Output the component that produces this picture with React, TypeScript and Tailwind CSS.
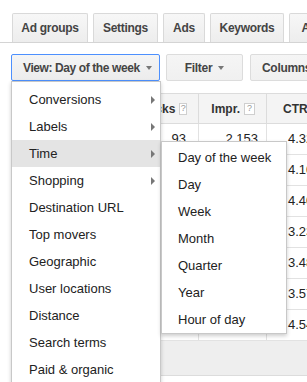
import React from "react";

const tabs = [
  { label: "Ad groups", w: "w-[76px]" },
  { label: "Settings", w: "w-[65px]" },
  { label: "Ads", w: "w-[42px]" },
  { label: "Keywords", w: "w-[74px]" },
  { label: "Auto targets", w: "w-[92px]" },
];

const menuItems: { label: string; arrow?: boolean; active?: boolean }[] = [
  { label: "Conversions", arrow: true },
  { label: "Labels", arrow: true },
  { label: "Time", arrow: true, active: true },
  { label: "Shopping", arrow: true },
  { label: "Destination URL" },
  { label: "Top movers" },
  { label: "Geographic" },
  { label: "User locations" },
  { label: "Distance" },
  { label: "Search terms" },
  { label: "Paid & organic" },
];

const subItems = ["Day of the week", "Day", "Week", "Month", "Quarter", "Year", "Hour of day"];

const rows = [
  ["Monday", "93", "2,153", "4.32%"],
  ["Tuesday", "88", "2,146", "4.10%"],
  ["Wednesday", "91", "2,068", "4.40%"],
  ["Thursday", "71", "2,198", "3.23%"],
  ["Friday", "64", "1,839", "3.48%"],
  ["Saturday", "58", "1,624", "3.57%"],
  ["Sunday", "82", "1,806", "4.54%"],
];

function Help() {
  return (
    <span className="ml-[4px] inline-flex h-[12px] w-[11px] items-center justify-center border border-[#cfcfcf] bg-white text-[9px] font-normal leading-none tracking-normal text-[#999]">
      ?
    </span>
  );
}

function Caret() {
  return <span className="ml-[6px] inline-block h-0 w-0 shrink-0 border-x-[3px] border-t-[4px] border-x-transparent border-t-[#777]" />;
}

export default function App() {
  return (
    <div className="relative h-[382px] w-[307px] overflow-hidden bg-white font-['Liberation_Sans',Arial,sans-serif] text-[13px] text-[#222]">
      {/* tabs */}
      <div className="box-border flex h-[43px] gap-[5px] border-b border-[#d4d4d4] pl-[12px] pt-[13px]">
        {tabs.map((t) => (
          <div
            key={t.label}
            className={`${t.w} flex h-[29px] shrink-0 items-center justify-center overflow-hidden whitespace-nowrap rounded-t-[2px] border border-b-0 border-[#d9d9d9] bg-gradient-to-b from-[#f7f7f7] to-[#ededed] text-[12px] font-bold tracking-[-0.3px] text-[#444]`}
          >
            {t.label}
          </div>
        ))}
      </div>

      {/* buttons */}
      <div className="mt-[11px] flex pl-[11px]">
        <div className="box-border flex h-[27px] w-[149px] shrink-0 items-center whitespace-nowrap rounded-[2px] border border-[#4d90fe] bg-gradient-to-b from-[#f5f5f5] to-[#ececec] pl-[11px] text-[12px] font-bold tracking-[-0.4px] text-[#444]">
          View: Day of the week
          <Caret />
        </div>
        <div className="ml-[6px] box-border flex h-[27px] w-[77px] shrink-0 items-center justify-center whitespace-nowrap rounded-[2px] border border-[#dcdcdc] bg-gradient-to-b from-[#f5f5f5] to-[#f0f0f0] text-[12px] font-bold tracking-[-0.3px] text-[#444]">
          Filter
          <Caret />
        </div>
        <div className="ml-[7px] box-border flex h-[27px] w-[90px] shrink-0 items-center whitespace-nowrap rounded-[2px] border border-[#dcdcdc] bg-gradient-to-b from-[#f5f5f5] to-[#f0f0f0] pl-[11px] text-[12px] font-bold tracking-[-0.3px] text-[#444]">
          Columns
          <Caret />
        </div>
      </div>

      {/* table */}
      <div className="ml-[11px] mt-[12px] w-[326px]">
        <div className="box-border grid h-[31px] grid-cols-[129px_59px_68px_70px] border-y border-[#dcdcdc] bg-[#f4f4f4] text-[12px] font-bold text-[#333]">
          <div className="flex items-center border-r border-[#dcdcdc] pl-[8px]">Day of the week</div>
          <div className="flex items-center justify-end border-r border-[#dcdcdc] pr-[11px]">
            Clicks
            <Help />
          </div>
          <div className="flex items-center justify-end border-r border-[#dcdcdc] pr-[11px]">
            Impr.
            <Help />
          </div>
          <div className="flex items-center pl-[16px]">
            CTR
            <Help />
          </div>
        </div>
        {rows.map((r) => (
          <div key={r[0]} className="box-border grid h-[31px] grid-cols-[129px_59px_68px_70px] border-b border-[#e2e2e2]">
            <div className="flex items-center border-r border-[#e2e2e2] pl-[8px]">{r[0]}</div>
            <div className="flex items-center justify-end border-r border-[#e2e2e2] pr-[12px]">{r[1]}</div>
            <div className="flex items-center justify-end border-r border-[#e2e2e2] pr-[8px]">{r[2]}</div>
            <div className="flex items-center pl-[21px]">{r[3]}</div>
          </div>
        ))}
        <div className="box-border h-[35px] border-b border-[#dcdcdc] bg-[#eeeeee]" />
      </div>

      {/* main menu */}
      <div className="absolute left-[11px] top-[81px] box-border h-[320px] w-[150px] border border-[#c8c8c8] bg-white pt-[4px] shadow-[0_2px_4px_rgba(0,0,0,0.2)]">
        {menuItems.map((m) => (
          <div
            key={m.label}
            className={`relative flex h-[27px] items-center pl-[17px] text-[13px] text-[#222] ${m.active ? "bg-[#e4e4e4]" : ""}`}
          >
            {m.label}
            {m.arrow && (
              <span className="absolute right-[5px] top-[10px] h-0 w-0 border-y-[4px] border-l-[4px] border-y-transparent border-l-[#777]" />
            )}
          </div>
        ))}
      </div>

      {/* submenu */}
      <div className="absolute left-[161px] top-[141px] box-border h-[193px] w-[126px] border border-[#c8c8c8] bg-white pt-[2px] shadow-[0_2px_4px_rgba(0,0,0,0.2)]">
        {subItems.map((s) => (
          <div key={s} className="flex h-[27px] items-center pl-[16px] text-[13px] text-[#222]">
            {s}
          </div>
        ))}
      </div>
    </div>
  );
}
